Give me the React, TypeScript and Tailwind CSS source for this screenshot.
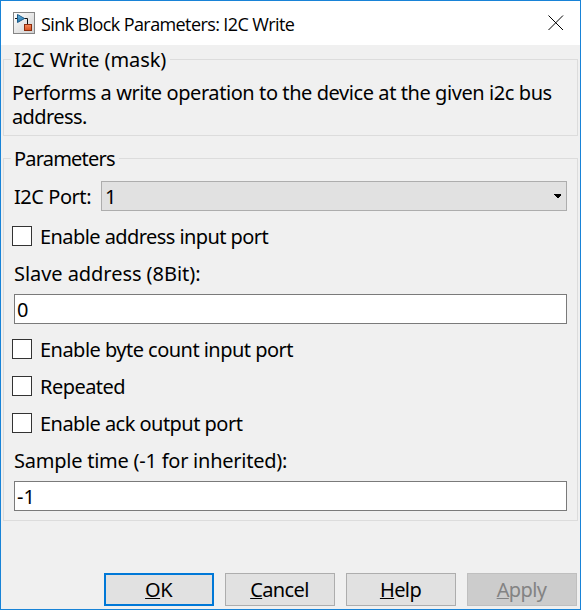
import type { ReactNode } from "react";

function ModelIcon() {
  return (
    <svg width="22" height="22" viewBox="0 0 22 22" className="shrink-0">
      <defs>
        <linearGradient id="paper" x1="0" y1="0" x2="1" y2="1">
          <stop offset="0" stopColor="#ffffff" />
          <stop offset="1" stopColor="#cfcfcf" />
        </linearGradient>
        <linearGradient id="blue" x1="0" y1="0" x2="0" y2="1">
          <stop offset="0" stopColor="#6fb9e4" />
          <stop offset="1" stopColor="#1f6fa5" />
        </linearGradient>
        <linearGradient id="orange" x1="0" y1="0" x2="0" y2="1">
          <stop offset="0" stopColor="#f58a5c" />
          <stop offset="1" stopColor="#d9501e" />
        </linearGradient>
      </defs>
      <rect x="0.5" y="0.5" width="21" height="21" fill="url(#paper)" stroke="#858585" />
      <path d="M2 6.5H5M11 6.5H14.5V12" fill="none" stroke="#111" />
      <path d="M4.5 2.5L11.5 6.5L4.5 10.5Z" fill="url(#blue)" stroke="#1d5c8a" />
      <rect x="11.5" y="12.5" width="7" height="6" fill="url(#orange)" stroke="#8c2c0c" />
    </svg>
  );
}

function Group({ title, className, children }: { title: ReactNode; className: string; children: ReactNode }) {
  return (
    <section className={`mx-[2px] border border-[#dcdcdc] ${className}`}>
      <h2 className="-mt-[13px] ml-[7px] h-6 w-fit bg-[#f0f0f0] pr-1 pl-[3px] leading-[26px]">{title}</h2>
      {children}
    </section>
  );
}

function Check({ children }: { children: ReactNode }) {
  return (
    <label className="ml-2 flex h-[37px] items-start gap-2">
      <span className="mt-2 size-5 shrink-0 border border-[#333] bg-white" />
      <span className="mt-[7px]">{children}</span>
    </label>
  );
}

function Field({ value }: { value: string }) {
  return (
    <div className="mr-[10px] ml-[10px] flex h-[30px] items-center border border-[#7a7a7a] bg-white pt-[2px] pl-[2px]">
      {value}
    </div>
  );
}

function Button({ mnemonic, rest, className }: { mnemonic: string; rest: string; className: string }) {
  return (
    <button className={`flex h-[33px] w-[110px] items-center justify-center pr-px tracking-[-0.6px] ${className}`}>
      <span className="underline decoration-1 underline-offset-1">{mnemonic}</span>
      <span>{rest}</span>
    </button>
  );
}

export default function App() {
  return (
    <div className="flex h-[610px] w-[581px] flex-col border border-[#1883d7] bg-[#f0f0f0] font-['Noto_Sans',sans-serif] text-[20px] leading-6 whitespace-nowrap text-black">
      <header className="flex h-11 shrink-0 items-center bg-white pl-3">
        <ModelIcon />
        <h1 className="ml-[6px] pt-px font-['Open_Sans',sans-serif] text-[18px] tracking-[-0.6px]">
          Sink Block Parameters: I2C Write
        </h1>
        <svg width="16" height="16" viewBox="0 0 16 16" className="mr-4 ml-auto">
          <path d="M0.5 0.5L15 15M15 0.5L0.5 15" stroke="#000" />
        </svg>
      </header>

      <Group className="mt-[14px] h-[77px]" title={<span className="tracking-[-0.1px]">I2C Write (mask)</span>}>
        <p className="mt-[10px] ml-2">
          <span className="tracking-[-0.42px]">Performs a write operation to the device at the given i2c bus</span>
          <br />
          <span className="tracking-[-0.6px]">address.</span>
        </p>
      </Group>

      <Group className="mt-[22px] h-[363px]" title={<span className="tracking-[-0.8px]">Parameters</span>}>
        <div className="mt-[11px] mr-[10px] ml-[10px] flex h-[30px] items-center">
          <span className="w-[87px] pt-[2px] tracking-[-0.45px]">I2C Port:</span>
          <div className="flex h-[30px] flex-1 items-center justify-between border border-[#adadad] bg-[#e1e1e1] pr-[5px] pl-[3px]">
            <span className="pt-[2px]">1</span>
            <svg width="7" height="4" viewBox="0 0 7 4" shapeRendering="crispEdges">
              <path d="M0 0H7V1L4 4H3L0 1Z" />
            </svg>
          </div>
        </div>
        <div className="mt-[7px] tracking-[-0.57px]">
          <Check>Enable address input port</Check>
        </div>
        <div className="mb-2 ml-[10px] pt-[7px] tracking-[-0.05px]">Slave address (8Bit):</div>
        <Field value="0" />
        <div className="mt-[7px] tracking-[-0.53px]">
          <Check>Enable byte count input port</Check>
          <Check>Repeated</Check>
          <Check>Enable ack output port</Check>
        </div>
        <div className="mb-2 ml-[10px] pt-[7px] tracking-[-0.24px]">Sample time (-1 for inherited):</div>
        <Field value="-1" />
      </Group>

      <footer className="mt-auto mr-[3px] mb-[3px] flex justify-end gap-[11px]">
        <Button mnemonic="O" rest="K" className="border-2 border-[#0078d7] bg-[#e1e1e1]" />
        <Button mnemonic="C" rest="ancel" className="border border-[#adadad] bg-[#e1e1e1]" />
        <Button mnemonic="H" rest="elp" className="border border-[#adadad] bg-[#e1e1e1]" />
        <Button mnemonic="A" rest="pply" className="border border-[#bfbfbf] bg-[#cccccc] text-[#838383]" />
      </footer>
    </div>
  );
}
